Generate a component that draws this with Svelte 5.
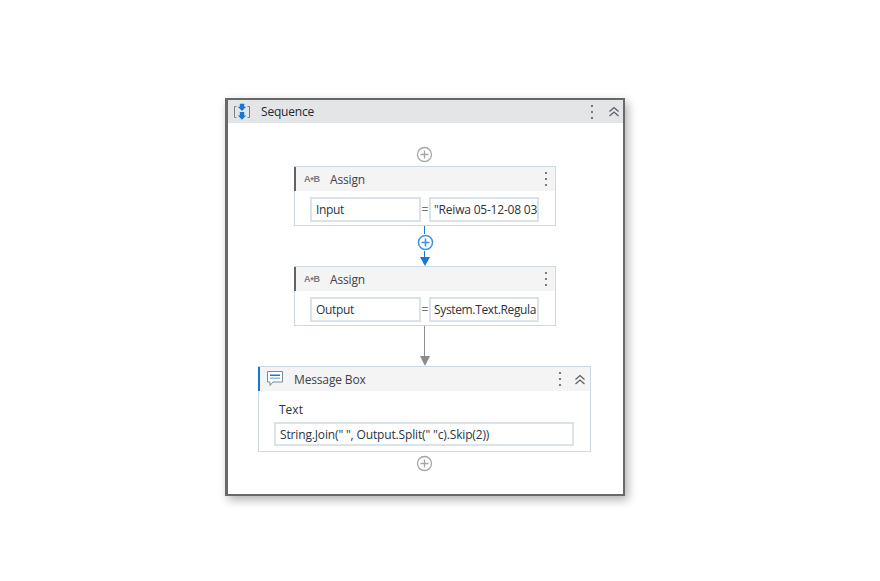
<script>
  const assigns = [
    { to: "Input", value: '"Reiwa 05-12-08 03:', loose: true },
    { to: "Output", value: "System.Text.Regula", loose: false }
  ];
</script>

{#snippet plus(active)}
  <svg class="plus" class:active width="17" height="17" viewBox="0 0 17 17" fill="none">
    <circle cx="8.5" cy="8.5" r="7" />
    <path d="M8.5 4.5v8M4.5 8.5h8" />
  </svg>
{/snippet}

{#snippet dots()}
  <svg class="dots" width="4" height="16" viewBox="0 0 4 16">
    <circle cx="2" cy="2" r="1.100" />
    <circle cx="2" cy="8" r="1.100" />
    <circle cx="2" cy="14" r="1.100" />
  </svg>
{/snippet}

{#snippet chevrons()}
  <svg class="chev" width="12" height="11" viewBox="0 0 12 11" fill="none">
    <path d="M1.500 5.500 6 1.500l4.500 4M1.500 10 6 6l4.500 4" />
  </svg>
{/snippet}

{#snippet assignCard(item)}
  <div class="card assign">
    <div class="head">
      <span class="ab">A<i>*</i>B</span>
      <span class="title">Assign</span>
      <span class="tools">{@render dots()}</span>
    </div>
    <div class="row">
      <div class="field to">{item.to}</div>
      <span class="eq">=</span>
      <div class="field val" class:loose={item.loose}>{item.value}</div>
    </div>
  </div>
{/snippet}

<div class="page">
  <div class="sequence">
    <div class="seq-head">
      <svg class="seq-icon" width="18" height="18" viewBox="0 0 18 18" fill="none">
        <path d="M3.500 3.500H1.500v11h2M14.500 3.500h2v11h-2" stroke="#808080" />
        <path d="M6.800.8h4.400v3h2L9 8 4.800 3.800h2zM6.800 9h4.400v3.500h2L9 16.800l-4.200-4.300h2z" fill="#1976d2" />
      </svg>
      <span class="seq-title">Sequence</span>
      <span class="seq-dots">{@render dots()}</span>
      <span class="seq-chev">{@render chevrons()}</span>
    </div>

    <div class="seq-body">
      <div class="add first">{@render plus(false)}</div>
      {@render assignCard(assigns[0])}

      <div class="link blue">
        <div class="line l1"></div>
        {@render plus(true)}
        <div class="line l2"></div>
        <div class="arrow"></div>
      </div>

      {@render assignCard(assigns[1])}

      <div class="link grey">
        <div class="line l3"></div>
        <div class="arrow"></div>
      </div>

      <div class="card message">
        <div class="head">
          <svg class="msg-icon" width="18" height="18" viewBox="0 0 18 18" fill="none">
            <path d="M1.500 1.500h15v10.500H7l-3 3.500v-3.500H1.500z" stroke="#7c8a94" fill="#fff" />
            <path d="M4 4.500h10v1.500H4z" fill="#1976d2" />
            <path d="M4 7.500h10v1.500H4z" fill="#8dbdea" />
          </svg>
          <span class="title">Message Box</span>
          <span class="tools">{@render dots()}</span>
          <span class="msg-chev">{@render chevrons()}</span>
        </div>
        <div class="msg-body">
          <div class="label">Text</div>
          <div class="field wide">String.Join(" ", Output.Split(" "c).Skip(2))</div>
        </div>
      </div>
      <div class="add last">{@render plus(false)}</div>
    </div>
  </div>
</div>

<style>
  :global(body) {
    margin: 0;
    background: #fff;
  }

  .page {
    box-sizing: border-box;
    width: 880px;
    height: 581px;
    padding: 98px 0 0 225px;
    overflow: hidden;
    background: #fff;
  }

  .sequence {
    box-sizing: border-box;
    width: 400px;
    height: 398px;
    border: 2px solid #696969;
    border-left-width: 3px;
    box-shadow: 3px 4px 9px rgba(0, 0, 0, 0.3);
    background: #fff;
    font-family: "Open Sans", "Noto Sans", sans-serif;
    font-size: 12px;
    color: #2b3440;
  }

  .seq-head {
    display: flex;
    align-items: center;
    height: 23px;
    background: #e4e5e7;
  }

  .seq-icon {
    margin-left: 5px;
  }

  .seq-title {
    margin-left: 10px;
    letter-spacing: -0.2px;
    color: #1f2730;
  }

  .seq-dots {
    display: flex;
    margin-left: auto;
    margin-right: 14px;
  }

  .seq-chev {
    display: flex;
    margin-right: 3px;
  }

  .seq-body {
    display: flex;
    flex-direction: column;
    align-items: center;
  }

  .add {
    display: flex;
    height: 17px;
    margin-left: -3px;
  }

  .add.first {
    margin-top: 23px;
    margin-bottom: 3px;
  }

  .add.last {
    margin-top: 3px;
  }

  .plus circle,
  .plus path {
    stroke: #a3a5a7;
    stroke-width: 1.3;
  }

  .plus.active circle,
  .plus.active path {
    stroke: #3f95e3;
    stroke-width: 1.6;
  }

  .card {
    box-sizing: border-box;
    border: 1px solid #cdd9e0;
    background: #fff;
  }

  .assign {
    width: 262px;
    height: 60px;
    margin-left: -1px;
  }

  .head {
    display: flex;
    align-items: center;
    height: 24px;
    margin-left: -1px;
    background: #f4f4f4;
    border-left: 2px solid #5f6265;
  }

  .message .head {
    border-left-color: #1976d2;
  }

  .ab {
    width: 16px;
    margin-left: 8px;
    font-family: "Liberation Sans", sans-serif;
    font-size: 9px;
    font-weight: 700;
    letter-spacing: -0.3px;
    color: #7a7c7e;
    white-space: nowrap;
  }

  .ab i {
    font-style: normal;
    vertical-align: -1px;
  }

  .title {
    margin-left: 10px;
    letter-spacing: -0.15px;
    color: #39434e;
  }

  .tools {
    display: flex;
    margin-left: auto;
    margin-right: 7px;
  }

  .dots circle {
    fill: #5b5f63;
  }

  .chev path {
    stroke: #5b5f63;
    stroke-width: 1.3;
  }

  .row {
    display: flex;
    align-items: center;
    margin: 6px 0 0 15px;
  }

  .field {
    box-sizing: border-box;
    height: 25px;
    padding: 0 4px;
    border: 2px solid #dbe3e8;
    line-height: 21px;
    letter-spacing: -0.35px;
    white-space: nowrap;
    overflow: hidden;
    color: #2b3440;
  }

  .field.loose {
    letter-spacing: -0.2px;
  }

  .to {
    width: 111px;
  }

  .eq {
    width: 8px;
    text-align: center;
    color: #6d7278;
  }

  .val {
    width: 110px;
    padding-left: 3px;
  }

  .link {
    display: flex;
    flex-direction: column;
    align-items: center;
    height: 40px;
    margin-left: -1px;
  }

  .line {
    width: 1px;
    margin-left: -1px;
  }

  .blue .line {
    background: #1976d2;
  }

  .l1 {
    height: 8px;
  }

  .l2 {
    height: 6px;
  }

  .l3 {
    height: 30px;
    background: #8c8c8c;
  }

  .blue .plus {
    flex: none;
  }

  .arrow {
    width: 0;
    height: 0;
    border-left: 5px solid transparent;
    border-right: 5px solid transparent;
    border-top: 9px solid #1976d2;
  }

  .grey .arrow {
    border-top-color: #8c8c8c;
    border-top-width: 10px;
  }

  .message {
    width: 333px;
    height: 86px;
    margin-left: -2px;
  }

  .msg-icon {
    margin-left: 6px;
  }

  .message .title {
    margin-left: 10px;
  }

  .message .tools {
    margin-right: 0;
  }

  .msg-chev {
    display: flex;
    margin: 0 4px 0 12px;
  }

  .msg-body {
    padding: 10px 16px 0 15px;
  }

  .label {
    height: 21px;
    padding-left: 5px;
    line-height: 17px;
    color: #2b3440;
  }

  .wide {
    height: 24px;
    line-height: 22px;
    letter-spacing: -0.15px;
  }
</style>
